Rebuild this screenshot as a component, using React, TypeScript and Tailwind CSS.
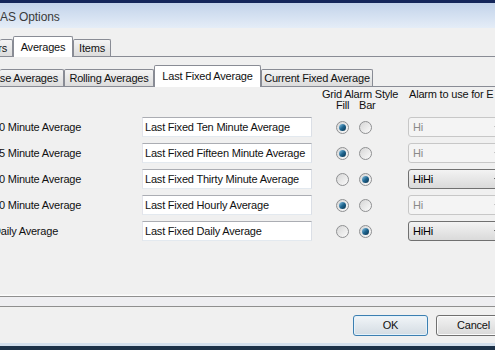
import * as React from 'react';

type Row = {
  label: string;
  name: string;
  bar: boolean;
  alarm: string;
};

const ROWS: Row[] = [
  { label: '10 Minute Average', name: 'Last Fixed Ten Minute Average', bar: false, alarm: 'Hi' },
  { label: '15 Minute Average', name: 'Last Fixed Fifteen Minute Average', bar: false, alarm: 'Hi' },
  { label: '30 Minute Average', name: 'Last Fixed Thirty Minute Average', bar: true, alarm: 'HiHi' },
  { label: '60 Minute Average', name: 'Last Fixed Hourly Average', bar: false, alarm: 'Hi' },
  { label: 'Daily Average', name: 'Last Fixed Daily Average', bar: true, alarm: 'HiHi' },
];

function Radio({ checked }: { checked: boolean }) {
  return (
    <div className="flex h-[13px] w-[13px] items-center justify-center rounded-full border border-[#8f9092] bg-linear-to-br from-[#d6d6d6] to-[#fbfbfb]">
      {checked && (
        <div className="h-[7px] w-[7px] rounded-full bg-linear-to-br from-[#8ccbea] via-[#1f6690] to-[#0b324c]" />
      )}
    </div>
  );
}

function Combo({ value, enabled }: { value: string; enabled: boolean }) {
  return (
    <div
      className={
        enabled
          ? 'flex h-[20px] w-[95px] items-center rounded-[3px] border border-[#707070] bg-linear-to-b from-[#f3f3f3] to-[#dadada] pl-[4px] text-black'
          : 'flex h-[20px] w-[95px] items-center rounded-[3px] border border-[#c7c7c7] bg-[#f4f4f4] pl-[4px] text-[#8a8a8a]'
      }
    >
      <span>{value}</span>
      <svg className="ml-auto mr-[3px]" width="5" height="3" viewBox="0 0 5 3">
        <path d="M0 0 H5 L2.5 3 Z" fill={enabled ? '#222' : '#a5a5a5'} />
      </svg>
    </div>
  );
}

function Tab({
  children,
  selected,
  width,
  clipped,
  tall,
}: {
  children: React.ReactNode;
  selected?: boolean;
  width: string;
  clipped?: boolean;
  tall: string;
}) {
  const base = 'flex shrink-0 items-center overflow-hidden whitespace-nowrap rounded-t-[2px] border-[#898c95] ';
  const shape = clipped ? 'justify-end border-t border-r pr-[5px] ' : 'justify-center border-t border-l border-r ';
  const look = selected
    ? `relative z-10 -mb-px bg-white ${tall}`
    : 'h-[17px] bg-linear-to-b from-[#f4f4f4] to-[#dcdcdc]';
  return <div className={`${base}${shape}${width} ${look}`}>{children}</div>;
}

export default function App() {
  return (
    <div className="flex h-[350px] w-[495px] flex-col overflow-hidden bg-[#f0f0f0] font-['Liberation_Sans',Arial,sans-serif] text-[11px] tracking-[-0.2px] text-[#111]">
      {/* window frame + title */}
      <div className="h-[3px] bg-[#14265a]" />
      <div className="flex h-[25px] items-center bg-linear-to-b from-[#c2d3ea] to-[#e5edf7] pt-[3px] text-[12px] tracking-[-0.1px] text-[#3a3a3a]">
        AS Options
      </div>

      {/* outer tabs */}
      <div className="mt-[8px] flex h-[21px] items-end border-b border-[#898c95]">
        <Tab width="w-[13px]" clipped tall="h-[21px]">
          Colors
        </Tab>
        <Tab width="w-[60px]" selected tall="h-[21px]">
          Averages
        </Tab>
        <Tab width="w-[38px]" tall="h-[21px]">
          Items
        </Tab>
      </div>

      {/* inner tabs */}
      <div className="mt-[8px] flex h-[22px] items-end border-b border-[#898c95]">
        <Tab width="w-[64px]" clipped tall="h-[22px]">
          Base Averages
        </Tab>
        <Tab width="w-[90px]" tall="h-[22px]">
          Rolling Averages
        </Tab>
        <Tab width="w-[107px]" selected tall="h-[22px]">
          Last Fixed Average
        </Tab>
        <Tab width="w-[112px]" tall="h-[22px]">
          Current Fixed Average
        </Tab>
      </div>

      {/* inner page */}
      <div className="flex h-[210px] flex-col border-b border-[#8f8f8f]">
        <div className="ml-[-7px] mt-[2px] flex whitespace-nowrap leading-[11px]">
          <div className="w-[329px] shrink-0" />
          <div className="w-[87px] shrink-0">
            <div>Grid Alarm Style</div>
            <div className="flex pl-[14px]">
              <span className="w-[23px]">Fill</span>
              <span>Bar</span>
            </div>
          </div>
          <div>Alarm to use for E</div>
        </div>

        <div className="ml-[-7px] mt-[6px] flex flex-col gap-[6px] whitespace-nowrap">
          {ROWS.map((r) => (
            <div key={r.label} className="flex h-[20px] items-center">
              <div className="w-[149px] shrink-0">{r.label}</div>
              <div className="flex h-[20px] w-[170px] shrink-0 items-center border border-[#abadb3] border-b-[#e3e9ef] border-l-[#e2e3ea] border-r-[#dbdfe6] bg-white pl-[2px]">
                {r.name}
              </div>
              <div className="ml-[24px]">
                <Radio checked={!r.bar} />
              </div>
              <div className="ml-[10px]">
                <Radio checked={r.bar} />
              </div>
              <div className="ml-[36px] shrink-0">
                <Combo value={r.alarm} enabled={r.bar} />
              </div>
            </div>
          ))}
        </div>

        <div className="mt-auto h-[3px] bg-linear-to-b from-[#ececec] to-white" />
      </div>

      {/* outer page bottom */}
      <div className="h-[10px] border-b border-[#8f8f8f] bg-[#eeeef1]" />

      {/* buttons */}
      <div className="flex gap-[8px] pl-[353px] pt-[8px]">
        <button className="h-[21px] w-[75px] shrink-0 rounded-[3px] border border-[#3c7fb1] bg-linear-to-b from-[#f1f5f8] to-[#d4dce3] text-[11px] shadow-[inset_0_0_0_1px_#e4f2fb]">
          OK
        </button>
        <button className="h-[21px] w-[75px] shrink-0 rounded-[3px] border border-[#707070] bg-linear-to-b from-[#f3f3f3] to-[#d9d9d9] text-[11px] shadow-[inset_0_0_0_1px_#fbfbfb]">
          Cancel
        </button>
      </div>

      <div className="mt-auto h-[3px] bg-[#d3dfec]" />
      <div className="h-[4px] bg-[#1c3148]" />
    </div>
  );
}
